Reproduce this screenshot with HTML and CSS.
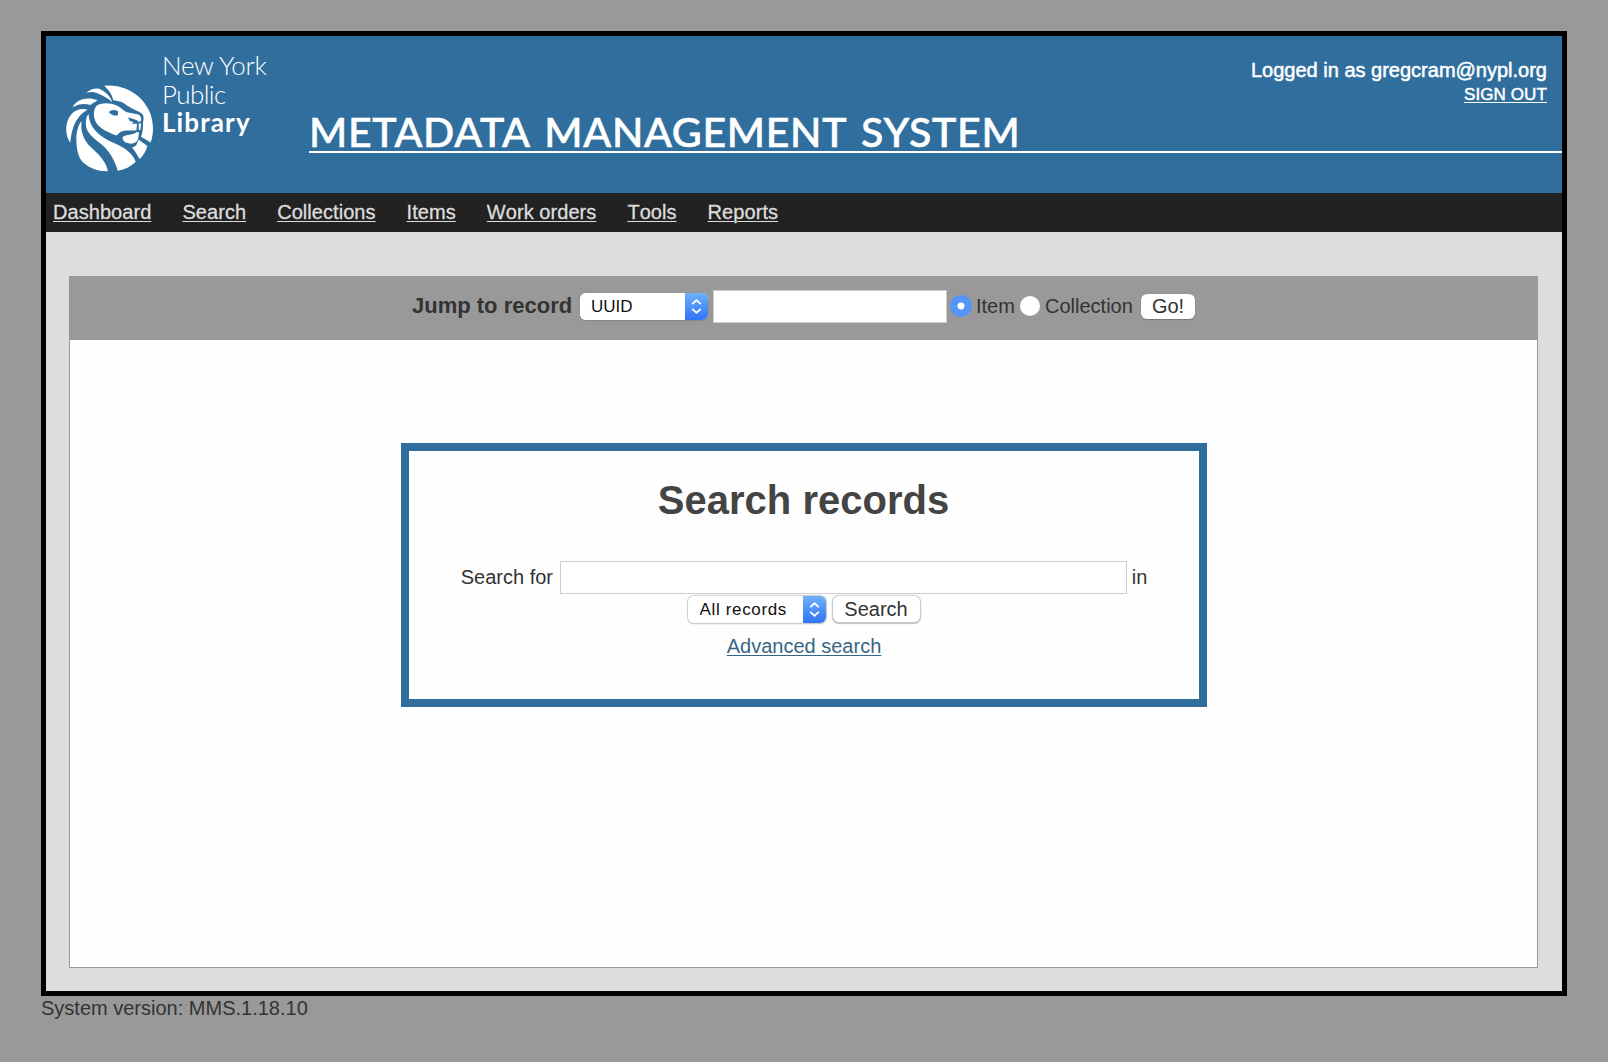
FILE: index.html
```html
<!DOCTYPE html>
<html lang="en">
<head>
<meta charset="utf-8">
<title>Metadata Management System</title>
<link rel="stylesheet" href="styles.css">
</head>
<body>
<div class="frame">
  <header class="header">
    <svg class="lion" viewBox="14 20 268 266" fill="#fff" aria-hidden="true">
      <path d="M132 24C210 16 280 76 279 153C279 168 277 181 272 195L243 178C248 165 249 148 249 134C253 116 250 109 238 103C222 97 212 90 200 84C186 70 172 71 160 68C155 50 147 38 132 24Z"/>
      <path d="M78 46C90 35 103 31 117 33C136 42 151 55 156 73C136 57 115 48 102 44C94 42 86 43 78 46Z"/>
      <path d="M37 89C49 64 83 56 112 68C103 74 96 78 90 82C72 76 54 79 37 89Z"/>
      <path d="M30 196C8 166 16 112 50 98C60 94 73 93 82 97C54 109 33 145 30 196Z"/>
      <path d="M64 131C56 138 48 160 48 185C49 216 53 238 68 255C89 274 115 283 143 282C141 260 118 232 97 214C75 194 59 168 64 131Z"/>
      <path d="M85 109C75 119 74 145 82 160C94 181 116 194 131 207C151 226 165 252 173 280C194 277 212 268 227 253C217 225 191 210 165 198C120 179 87 152 85 109Z"/>
      <path fill-rule="evenodd" d="M110 84C126 73 153 76 168 83C182 89 191 101 204 105L236 111C243 116 244 124 243 130L235 134L231 128L204 119L208 130L221 134L214 139L231 139L229 158C213 160 190 156 180 164L169 174C147 165 119 155 107 134C99 117 98 97 110 84ZM146 104C152 96 168 95 174 102L173 112C169 117 154 113 146 104Z"/>
      <path d="M236 138L243 137L241 157L236 158Z"/>
      <path d="M187 179C198 170 220 174 231 163L237 166L234 184C230 198 216 201 203 197C193 195 187 188 187 179Z"/>
      <path d="M216 211L228 204L236 187L262 206C258 222 249 236 239 245C232 236 226 221 216 211Z"/>
    </svg>
    <div class="wordmark"><span class="wm-new">New York</span><span class="wm-public">Public</span><b>Library</b></div>
    <h1 class="title"><span>METADATA MANAGEMENT SYSTEM</span></h1>
    <div class="account">
      <span>Logged in as gregcram@nypl.org</span>
      <a class="signout" href="#">SIGN OUT</a>
    </div>
  </header>
  <nav class="nav">
    <a href="#">Dashboard</a><a href="#">Search</a><a href="#">Collections</a><a href="#">Items</a><a href="#">Work orders</a><a href="#">Tools</a><a href="#">Reports</a>
  </nav>
  <main class="main">
    <div class="panel">
      <form class="jump">
        <b class="jump-label">Jump to record</b>
        <span class="picker picker-id">
          <select class="picker-field uuid"><option>UUID</option></select>
          <svg class="picker-arrows" viewBox="0 0 23 28"><path d="M7 11.5L11.5 7.5L16 11.5M7 16.5L11.5 20.5L16 16.5"/></svg>
        </span>
        <input class="field jump-field" type="text">
        <input class="radio radio-item" type="radio" name="kind" checked>
        <span class="item-label">Item</span>
        <input class="radio radio-collection" type="radio" name="kind">
        <span class="collection-label">Collection</span>
        <button class="btn go" type="button">Go!</button>
      </form>
      <section class="search">
        <h2>Search records</h2>
        <div class="row query">
          <span class="query-label">Search for</span>
          <input class="field search-field" type="text">
          <span class="query-in">in</span>
        </div>
        <div class="row scope">
          <span class="picker picker-scope">
            <select class="picker-field all"><option>All records</option></select>
            <svg class="picker-arrows" viewBox="0 0 23 28"><path d="M7 11.5L11.5 7.5L16 11.5M7 16.5L11.5 20.5L16 16.5"/></svg>
          </span>
          <button class="btn find" type="button">Search</button>
        </div>
        <a class="advanced" href="#">Advanced search</a>
      </section>
    </div>
  </main>
</div>
<footer class="version">System version: MMS.1.18.10</footer>
</body>
</html>
```

FILE: styles.css
```css
* { box-sizing: border-box; }
body {
  margin: 0;
  padding: 31px 41px 0;
  height: 1062px;
  background: #999;
  color: #333;
  font: 20px/24px "Liberation Sans", Arial, sans-serif;
  overflow: hidden;
}
.frame {
  height: 965px;
  border: 5px solid #000;
  background: #ddd;
  display: flex;
  flex-direction: column;
}
.header {
  position: relative;
  height: 157px;
  background: #306e9e;
  color: #fff;
  display: flex;
  align-items: flex-start;
  padding-left: 19px;
}
.lion { width: 89px; height: 89px; margin-top: 48px; }
.wordmark {
  width: 120px;
  margin: 15px 0 0 8px;
  display: flex;
  flex-direction: column;
  font: 300 26px/28.5px Lato, sans-serif;
  white-space: nowrap;
}
.wm-new { letter-spacing: -.3px; }
.wm-public { letter-spacing: -.6px; }
.wordmark b { font-weight: 700; letter-spacing: 1.1px; }
.title {
  flex: 1;
  margin: 73px 0 0 27px;
  height: 44px;
  border-bottom: 2px solid #fff;
  font: 500 41px/46px Lato, sans-serif;
  letter-spacing: .7px;
  word-spacing: 4px;
  -webkit-text-stroke: .6px #fff;
  white-space: nowrap;
}
.account {
  position: absolute;
  top: 22px;
  right: 15px;
  display: flex;
  flex-direction: column;
  align-items: flex-end;
  -webkit-text-stroke: .5px #fff;
}
.signout { margin-top: 1px; color: #fff; font-size: 17px; letter-spacing: .1px; text-underline-offset: 2px; }
.nav {
  height: 39px;
  background: #222;
  display: flex;
  gap: 31px;
  padding: 7px 0 0 7px;
  font-kerning: none;
  letter-spacing: .06px;
}
.nav a { color: #ddd; text-underline-offset: 2px; text-decoration-thickness: 1px; -webkit-text-stroke: .3px #ddd; }
.main { flex: 1; padding: 44px 24px 23px 23px; display: flex; }
.panel { flex: 1; background: #fefefe; border: 1px solid #999; }
.jump {
  height: 64px;
  margin-top: -1px;
  background: #999;
  display: flex;
  align-items: center;
  padding: 0 0 4px 342px;
}
.jump-label { width: 168px; font-size: 22px; }
.picker { display: flex; height: 27px; border-radius: 6px; overflow: hidden; background: #fff; box-shadow: 0 0 1px #777, 0 1px 1px #888; }
.picker-field { appearance: none; border: 0; background: #fff; margin: 0; padding: 0 0 0 11px; font: 17px "Liberation Sans", Arial, sans-serif; color: #111; border-radius: 0; flex: 1; min-width: 0; }
.all { padding-left: 12px; letter-spacing: .65px; }
.picker-arrows { width: 23px; height: 100%; background: linear-gradient(#6eb0f8, #2f74f8); fill: none; stroke: #fff; stroke-width: 1.8; }
.picker-id { width: 128px; }
.picker-scope { width: 138px; }
.field { appearance: none; border: 1.5px solid #ccc; background: #fff; padding: 0; margin: 0; height: 33px; }
.jump-field { width: 234px; margin-left: 5px; }
.radio { appearance: none; margin: 0; border-radius: 50%; background: #fff; }
.radio-item { width: 22px; height: 22px; margin-left: 3px; background: radial-gradient(circle, #fff 3px, #5595f5 4px); }
.radio-collection { width: 20px; height: 20px; }
.item-label { width: 44px; margin-left: 4px; }
.collection-label { width: 96px; margin-left: 5px; }
.btn { appearance: none; margin: 0; padding: 0; border: 0; border-radius: 6px; background: #fff; color: #333; font: 20px/24px "Liberation Sans", Arial, sans-serif; box-shadow: 0 0 1px 1px #ccc, 0 1px 1px 1px #bbb; }
.go { width: 54px; height: 25px; box-shadow: 0 0 1px #777, 0 1px 1px #777; }
.search {
  width: 806px;
  height: 264px;
  margin: 103px auto 0;
  border: 8px solid #306e9e;
  display: flex;
  flex-direction: column;
  align-items: center;
}
.search h2 { margin: 26px 0 0; font-size: 40px; line-height: 46px; color: #444; }
.row { display: flex; align-items: center; }
.query { margin: 38px 0 0 1px; }
.query-label { width: 99px; padding-bottom: 2px; }
.query-in { padding-bottom: 2px; }
.search-field { width: 567px; margin-right: 5px; }
.scope { gap: 7px; margin-top: 2px; height: 27px; }
.find { width: 87px; height: 26px; margin-bottom: 1px; }
.picker-scope { box-shadow: 0 0 1px 1px #ccc, 0 1px 1px #aaa; }
.advanced { margin: 11px 0 0 1px; color: #376684; text-underline-offset: 2px; text-decoration-thickness: 1px; }
.version { line-height: 24px; }
```
